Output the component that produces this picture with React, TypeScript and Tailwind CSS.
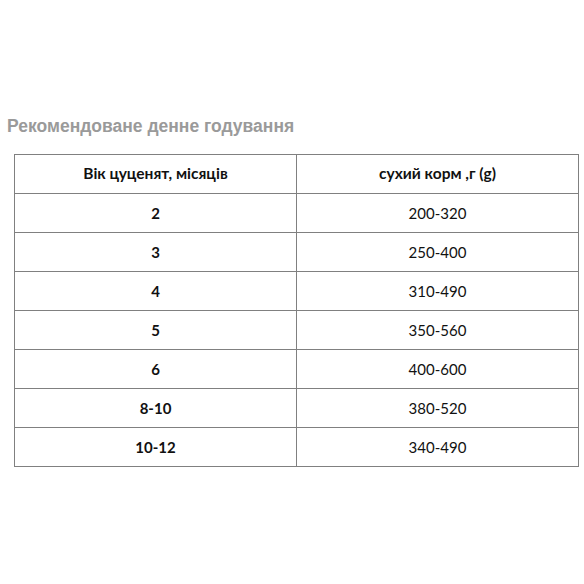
import React from 'react';

const rows = [
  ['2', '200-320'],
  ['3', '250-400'],
  ['4', '310-490'],
  ['5', '350-560'],
  ['6', '400-600'],
  ['8-10', '380-520'],
  ['10-12', '340-490'],
];

export default function App() {
  return (
    <div className="w-[584px] h-[584px] bg-white pt-[115px]">
      <h2 className="pl-[7px] text-[17.5px] leading-[22px] font-bold text-[#9a9a9a] font-['Liberation_Sans',Arial,sans-serif]">
        Рекомендоване денне годування
      </h2>
      <table className="ml-[14px] mt-[17px] w-[565px] border-collapse table-fixed font-['Lato','Open_Sans',sans-serif] text-[15px] text-[#111]">
        <thead>
          <tr className="h-[39px]">
            <th className="border border-[#808080] font-bold text-[15.5px]">Вік цуценят, місяців</th>
            <th className="border border-[#808080] font-bold text-[15.5px]">сухий корм ,г (g)</th>
          </tr>
        </thead>
        <tbody>
          {rows.map(([age, amount]) => (
            <tr key={age} className="h-[39px]">
              <td className="border border-[#808080] text-center font-bold">{age}</td>
              <td className="border border-[#808080] text-center">{amount}</td>
            </tr>
          ))}
        </tbody>
      </table>
    </div>
  );
}
